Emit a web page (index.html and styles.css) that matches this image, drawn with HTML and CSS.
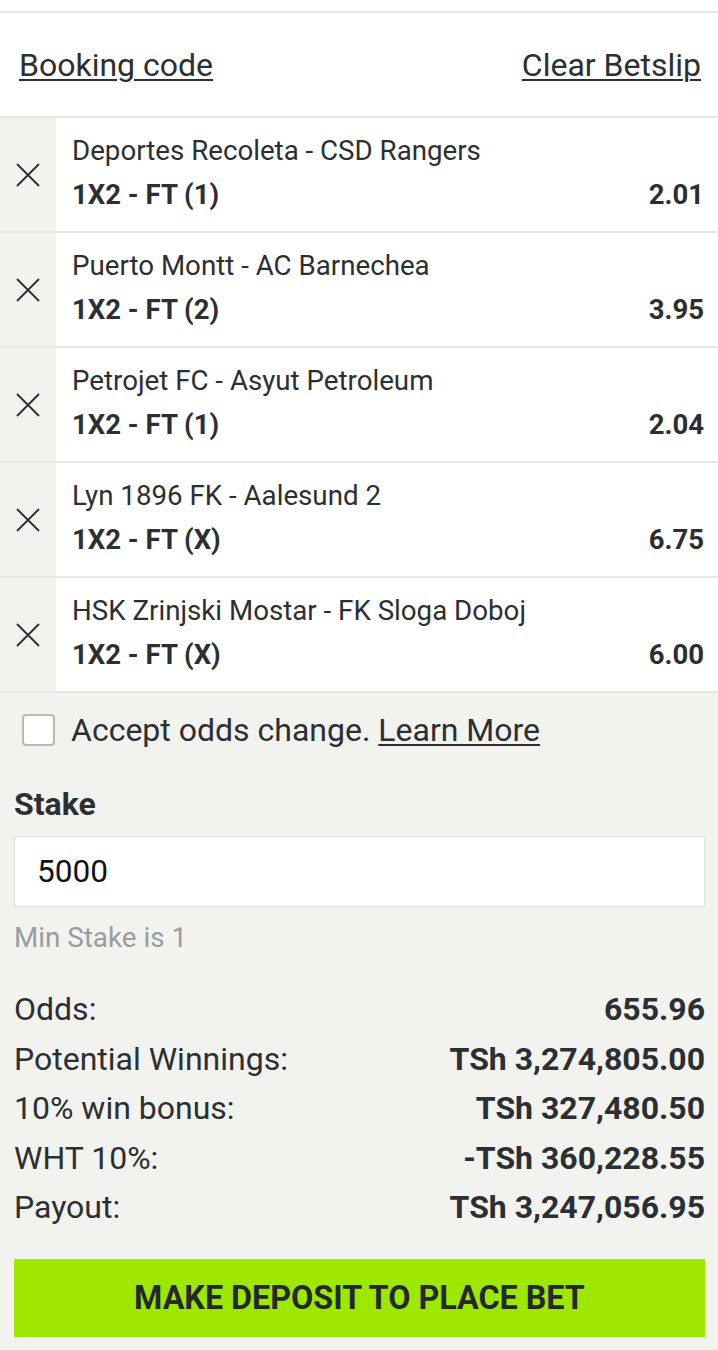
FILE: index.html
```html
<!DOCTYPE html>
<html lang="en">
<head>
    <meta charset="UTF-8">
    <meta name="viewport" content="width=device-width, initial-scale=1.0">
    <title>Betslip</title>
    <link rel="stylesheet" href="styles.css">
</head>
<body>
    <div class="top-strip"></div>

    <div class="slip-actions">
        <a href="#" class="link">Booking code</a>
        <a href="#" class="link">Clear Betslip</a>
    </div>

    <div class="selections">
        <div class="selection">
            <button class="remove" aria-label="Remove">
                <svg width="26" height="26" viewBox="0 0 26 26"><path d="M2 2 L24 24 M24 2 L2 24" stroke="#2b2f33" stroke-width="1.8" fill="none"/></svg>
            </button>
            <div class="selection-body">
                <div class="match">Deportes Recoleta - CSD Rangers</div>
                <div class="market-line">
                    <span class="market">1X2 - FT (1)</span>
                    <span class="odd">2.01</span>
                </div>
            </div>
        </div>
        <div class="selection">
            <button class="remove" aria-label="Remove">
                <svg width="26" height="26" viewBox="0 0 26 26"><path d="M2 2 L24 24 M24 2 L2 24" stroke="#2b2f33" stroke-width="1.8" fill="none"/></svg>
            </button>
            <div class="selection-body">
                <div class="match">Puerto Montt - AC Barnechea</div>
                <div class="market-line">
                    <span class="market">1X2 - FT (2)</span>
                    <span class="odd">3.95</span>
                </div>
            </div>
        </div>
        <div class="selection">
            <button class="remove" aria-label="Remove">
                <svg width="26" height="26" viewBox="0 0 26 26"><path d="M2 2 L24 24 M24 2 L2 24" stroke="#2b2f33" stroke-width="1.8" fill="none"/></svg>
            </button>
            <div class="selection-body">
                <div class="match">Petrojet FC - Asyut Petroleum</div>
                <div class="market-line">
                    <span class="market">1X2 - FT (1)</span>
                    <span class="odd">2.04</span>
                </div>
            </div>
        </div>
        <div class="selection">
            <button class="remove" aria-label="Remove">
                <svg width="26" height="26" viewBox="0 0 26 26"><path d="M2 2 L24 24 M24 2 L2 24" stroke="#2b2f33" stroke-width="1.8" fill="none"/></svg>
            </button>
            <div class="selection-body">
                <div class="match">Lyn 1896 FK - Aalesund 2</div>
                <div class="market-line">
                    <span class="market">1X2 - FT (X)</span>
                    <span class="odd">6.75</span>
                </div>
            </div>
        </div>
        <div class="selection">
            <button class="remove" aria-label="Remove">
                <svg width="26" height="26" viewBox="0 0 26 26"><path d="M2 2 L24 24 M24 2 L2 24" stroke="#2b2f33" stroke-width="1.8" fill="none"/></svg>
            </button>
            <div class="selection-body">
                <div class="match">HSK Zrinjski Mostar - FK Sloga Doboj</div>
                <div class="market-line">
                    <span class="market">1X2 - FT (X)</span>
                    <span class="odd">6.00</span>
                </div>
            </div>
        </div>
    </div>

    <div class="slip-footer">
        <label class="accept">
            <span class="checkbox"></span>
            <span>Accept odds change. <a href="#" class="link">Learn More</a></span>
        </label>

        <div class="stake-label">Stake</div>
        <div class="stake-input">5000</div>
        <div class="min-stake">Min Stake is 1</div>

        <div class="summary">
            <div class="summary-row"><span>Odds:</span><strong>655.96</strong></div>
            <div class="summary-row"><span>Potential Winnings:</span><strong>TSh 3,274,805.00</strong></div>
            <div class="summary-row"><span>10% win bonus:</span><strong>TSh 327,480.50</strong></div>
            <div class="summary-row"><span>WHT 10%:</span><strong>-TSh 360,228.55</strong></div>
            <div class="summary-row"><span>Payout:</span><strong>TSh 3,247,056.95</strong></div>
        </div>

        <button class="place-bet">MAKE DEPOSIT TO PLACE BET</button>
    </div>
</body>
</html>
```

FILE: styles.css
```css
body {
    margin: 0;
    padding: 0;
    font-family: Roboto, "Liberation Sans", sans-serif;
    color: #2b2f33;
    background-color: #f2f2ef;
}
.top-strip {
    height: 11px;
    background-color: #fff;
    border-bottom: 2px solid #e6e6e3;
}
.slip-actions {
    display: flex;
    justify-content: space-between;
    align-items: center;
    height: 103px;
    padding: 0 17px 0 19px;
    background-color: #fff;
    font-size: 32px;
    line-height: 36px;
}
.link {
    color: #2b2f33;
    text-decoration: underline;
    text-underline-offset: 3px;
    text-decoration-thickness: 2px;
}
.selection {
    display: flex;
    height: 113px;
    border-top: 2px solid #e6e6e3;
}
.selection:last-child {
    border-bottom: 2px solid #e6e6e3;
}
.remove {
    width: 56px;
    flex-shrink: 0;
    border: none;
    padding: 0;
    background-color: #f2f2ef;
    display: flex;
    align-items: center;
    justify-content: center;
}
.selection-body {
    flex: 1;
    background-color: #fff;
    padding: 16px 14px 0 16px;
}
.match {
    font-size: 27.7px;
    line-height: 34px;
}
.market-line {
    display: flex;
    justify-content: space-between;
    margin-top: 10px;
    font-size: 27.5px;
    line-height: 34px;
    font-weight: bold;
}
.slip-footer {
    padding: 20px 13px 12px 14px;
}
.accept {
    display: flex;
    align-items: center;
    gap: 16px;
    padding-left: 8px;
    font-size: 32px;
    line-height: 34px;
}
.checkbox {
    width: 29px;
    height: 28px;
    border: 2px solid #b9b9b9;
    border-radius: 4px;
    background-color: #fff;
}
.stake-label {
    margin-top: 41px;
    font-size: 32px;
    line-height: 32px;
    font-weight: bold;
}
.stake-input {
    margin-top: 16px;
    height: 69px;
    line-height: 69px;
    padding: 0 22px;
    background-color: #fff;
    border: 1px solid #e0e0dd;
    font-size: 31.6px;
    color: #111;
}
.min-stake {
    margin-top: 17px;
    font-size: 27.8px;
    line-height: 28px;
    color: #9a9c9f;
}
.summary {
    margin-top: 33px;
}
.summary-row {
    display: flex;
    justify-content: space-between;
    font-size: 32px;
    line-height: 49.6px;
}
.place-bet {
    display: block;
    width: 100%;
    margin-top: 26px;
    height: 78px;
    border: none;
    background-color: #9ee800;
    color: #23282b;
    font-family: Roboto, "Liberation Sans", sans-serif;
    font-size: 32.3px;
    font-weight: bold;
}
```
